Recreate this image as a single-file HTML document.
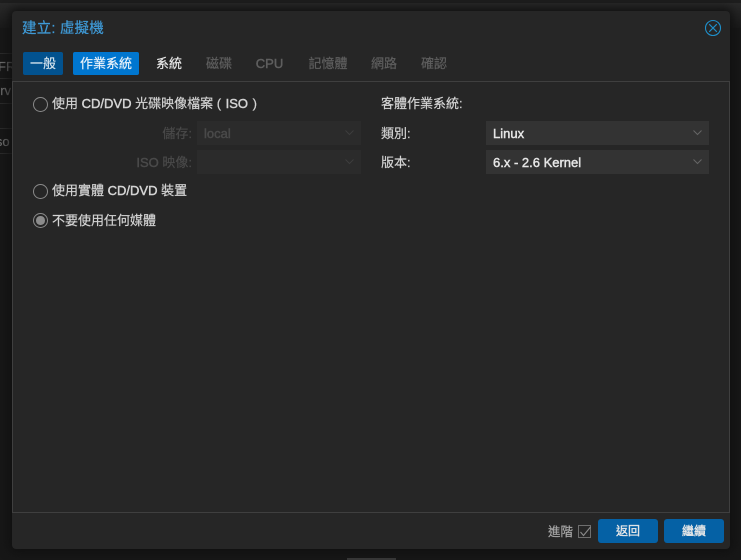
<!DOCTYPE html>
<html lang="zh-Hant">
<head>
<meta charset="utf-8">
<style>
*{box-sizing:border-box}
html,body{margin:0;padding:0}
body{width:741px;height:560px;overflow:hidden;background:#171717;position:relative;font-family:"Liberation Sans","Noto Sans CJK TC",sans-serif;font-size:13px;color:#d9d9d9;-webkit-text-stroke:.2px currentColor}
.a{position:absolute;white-space:nowrap}
.bgt{left:0;top:0;width:741px;height:3px;background:#1e1e1e}
.bgs{left:0;top:3px;width:741px;height:25px;background:linear-gradient(#2a2a2a,#1a1a1a)}
.row{left:0;width:12px;height:1px;background:#2b2b2b}
.bgtxt{color:#6e6e6e;font-size:13px;line-height:16px}
.dlg{left:12px;top:11px;width:718px;height:538px;background:#262626;border-radius:4px;box-shadow:0 0 10px 3px #101010}
.title{left:22px;top:20px;font-size:14.5px;color:#3f9bd8;line-height:18px;letter-spacing:.2px}
.tab{top:52px;height:23px;line-height:23px;text-align:center;border-radius:2px;font-size:13px}
.off{color:#5f5f5f}
.ln{background:#3f3f3f}
.lbl{line-height:18px;color:#d4d4d4}
.dis{color:#4a4a4a;text-align:right}
.fld{height:24px;background:#333}
.fldd{height:24px;background:#2b2b2b}
.val{line-height:18px;color:#e6e6e6;-webkit-text-stroke:.45px currentColor}
.b{-webkit-text-stroke:.45px currentColor}
.rad{left:33px;width:15px;height:15px;border:1.5px solid #8a8a8a;border-radius:50%;background:#262626}
.dot{left:36.25px;width:8.5px;height:8.5px;border-radius:50%;background:#8c8c8c}
.btn{top:519px;height:24px;width:60px;line-height:24px;text-align:center;background:#0561a5;border-radius:3px;color:#e8e8e8;font-size:12px;-webkit-text-stroke:.35px currentColor}
</style>
</head>
<body>
<div class="a bgs"></div>
<div class="a bgt"></div>
<div class="a row" style="top:53px"></div>
<div class="a row" style="top:78px"></div>
<div class="a row" style="top:103px"></div>
<div class="a row" style="top:128px"></div>
<div class="a row" style="top:153px"></div>
<div class="a bgtxt" style="left:-2px;top:59px;width:14px;overflow:hidden">FR</div>
<div class="a bgtxt" style="left:-7px;top:83px;width:19px;overflow:hidden">erv</div>
<div class="a bgtxt" style="left:-7px;top:134px;width:19px;overflow:hidden">iso</div>
<div class="a" style="left:347px;top:558px;width:49px;height:2px;background:#3a3a3a"></div>

<div class="a dlg"></div>
<div class="a title">建立: 虛擬機</div>
<svg class="a" style="left:704px;top:19px" width="18" height="18" viewBox="0 0 18 18" fill="none" stroke="#1f8fc9" stroke-width="1.1"><circle cx="9" cy="9" r="7.5"/><path d="M5.2 5.2L12.8 12.8M12.8 5.2L5.2 12.8"/></svg>

<div class="a tab" style="left:23px;width:40px;background:#02528f;color:#d6e4ee">一般</div>
<div class="a tab" style="left:73px;width:66px;background:#0076cf;color:#e8f2fa">作業系統</div>
<div class="a tab" style="left:149px;width:40px;color:#e6e6e6">系統</div>
<div class="a tab off" style="left:199px;width:40px">磁碟</div>
<div class="a tab off" style="left:249px;width:41px;-webkit-text-stroke:.45px currentColor">CPU</div>
<div class="a tab off" style="left:301px;width:54px">記憶體</div>
<div class="a tab off" style="left:364px;width:40px">網路</div>
<div class="a tab off" style="left:414px;width:40px">確認</div>

<div class="a ln" style="left:12px;top:81px;width:718px;height:1px"></div>
<div class="a ln" style="left:12px;top:82px;width:1px;height:431px"></div>
<div class="a ln" style="left:729px;top:82px;width:1px;height:431px"></div>
<div class="a ln" style="left:12px;top:512px;width:718px;height:1px"></div>

<div class="a rad" style="top:97px"></div>
<div class="a lbl" style="left:52px;top:95px">使用 <span class="b">CD/DVD</span> 光碟映像檔案 (<span class="b" style="margin:0 1px"> ISO </span>)</div>

<div class="a lbl dis" style="left:120px;top:125px;width:72px">儲存:</div>
<div class="a fldd" style="left:197px;top:121px;width:164px"></div>
<div class="a val" style="left:204px;top:125px;color:#4a4a4a">local</div>
<svg class="a" style="left:345px;top:130px" width="9" height="6" fill="none" stroke="#3d3d3d"><path d="M.5 .5L4.5 4.5L8.5 .5"/></svg>

<div class="a lbl dis" style="left:120px;top:154px;width:72px"><span class="b">ISO</span> 映像:</div>
<div class="a fldd" style="left:197px;top:150px;width:164px"></div>
<svg class="a" style="left:345px;top:159px" width="9" height="6" fill="none" stroke="#3d3d3d"><path d="M.5 .5L4.5 4.5L8.5 .5"/></svg>

<div class="a rad" style="top:184px"></div>
<div class="a lbl" style="left:52px;top:182px">使用實體 <span class="b">CD/DVD</span> 裝置</div>

<div class="a rad" style="top:213px"></div>
<div class="a dot" style="top:216.25px"></div>
<div class="a lbl" style="left:52px;top:212px">不要使用任何媒體</div>

<div class="a lbl" style="left:381px;top:95px">客體作業系統:</div>
<div class="a lbl" style="left:381px;top:125px">類別:</div>
<div class="a fld" style="left:486px;top:121px;width:223px"></div>
<div class="a val" style="left:493px;top:125px">Linux</div>
<svg class="a" style="left:693px;top:130px" width="9" height="6" fill="none" stroke="#666"><path d="M.5 .5L4.5 4.5L8.5 .5"/></svg>

<div class="a lbl" style="left:381px;top:154px">版本:</div>
<div class="a fld" style="left:486px;top:150px;width:223px"></div>
<div class="a val" style="left:493px;top:154px">6.x - 2.6 Kernel</div>
<svg class="a" style="left:693px;top:159px" width="9" height="6" fill="none" stroke="#666"><path d="M.5 .5L4.5 4.5L8.5 .5"/></svg>

<div class="a lbl" style="left:548px;top:523px;color:#a8a8a8;font-size:12.5px">進階</div>
<svg class="a" style="left:578px;top:525px" width="14" height="14" fill="none"><rect x=".5" y=".5" width="12" height="12" stroke="#6e6e6e"/><path d="M2.5 7L5.5 10.5L12.5 2" stroke="#8a8a8a" stroke-width="1.1"/></svg>
<div class="a btn" style="left:598px">返回</div>
<div class="a btn" style="left:664px">繼續</div>
</body>
</html>
